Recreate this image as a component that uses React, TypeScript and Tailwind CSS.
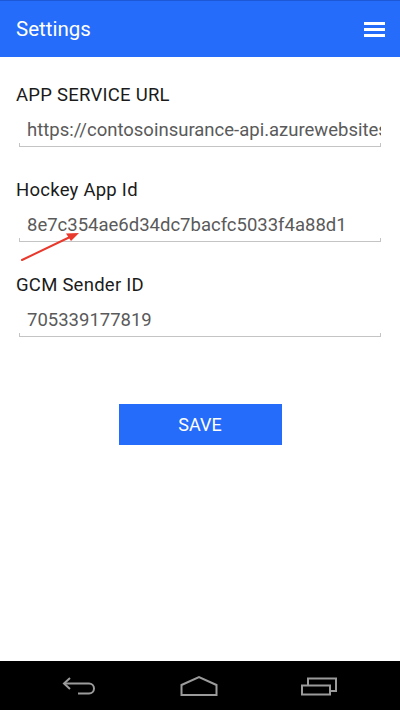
import React from "react";

const FONT = { fontFamily: "Roboto, 'Noto Sans', sans-serif" };

interface FieldProps {
  label: string;
  value: string;
  first?: boolean;
}

function Field({ label, value, first }: FieldProps) {
  return (
    <div className={first ? "" : "mt-[33px]"}>
      <div className="pl-4 text-[18.5px] leading-[21px] tracking-[0.25px] text-[#1b1b1b]">{label}</div>
      <div className="ml-[19px] mt-[14px] w-[362px]">
        <div className="overflow-hidden whitespace-nowrap pl-[8px] pr-[8px] text-[18.5px] leading-[21px] text-[#5a5a5a]">
          {value}
        </div>
        <div className="mt-[2px] h-[4px] border-x border-b border-[#c4c4c4]" />
      </div>
    </div>
  );
}

function NavBar() {
  return (
    <div className="mt-auto flex h-[49px] items-center justify-center gap-[82px] bg-black">
      {/* back */}
      <svg width="36" height="20" viewBox="0 0 36 20" fill="none" stroke="#9b9b9b" strokeWidth="2">
        <path d="M8 2 L2 7.5 L8 13" strokeLinejoin="miter" />
        <path d="M2 7.5 H27 A5 5 0 0 1 27 17.5 H16" />
      </svg>
      {/* home */}
      <svg width="38" height="20" viewBox="0 0 38 20" fill="none" stroke="#9b9b9b" strokeWidth="2">
        <path d="M1.5 19 V9 L19 1.2 L36.5 9 V19 Z" />
      </svg>
      {/* recents */}
      <svg width="38" height="20" viewBox="0 0 38 20" fill="none" stroke="#9b9b9b" strokeWidth="2">
        <rect x="2" y="9.5" width="28" height="9" />
        <path d="M8 9.5 V2.5 H36 V15 H30" />
      </svg>
    </div>
  );
}

export default function App() {
  return (
    <div className="relative flex h-[710px] w-[400px] flex-col bg-white" style={FONT}>
      <header className="flex h-[57px] items-center justify-between border-t border-[#1d59d6] bg-[#256cfa] pl-4 pr-[15px]">
        <h1 className="text-[20.5px] leading-[24px] text-white">Settings</h1>
        <div className="flex w-[21px] flex-col gap-[3px]">
          <span className="h-[3px] bg-white" />
          <span className="h-[3px] bg-white" />
          <span className="h-[3px] bg-white" />
        </div>
      </header>

      <main className="pt-[28px]">
        <Field first label="APP SERVICE URL" value="https://contosoinsurance-api.azurewebsites.net" />
        <Field label="Hockey App Id" value="8e7c354ae6d34dc7bacfc5033f4a88d1" />
        <Field label="GCM Sender ID" value="705339177819" />

        <button className="mx-auto mt-[67px] block h-[41px] w-[163px] bg-[#256cfa] text-[18px] text-white">
          SAVE
        </button>
      </main>

      <NavBar />

      {/* annotation arrow */}
      <svg className="absolute left-0 top-0" width="400" height="300" viewBox="0 0 400 300">
        <line x1="22" y1="260" x2="70" y2="237" stroke="#e8392c" strokeWidth="2" strokeLinecap="round" />
        <path d="M79 233 L66 233.5 L71 241 Z" fill="#e8392c" />
      </svg>
    </div>
  );
}
